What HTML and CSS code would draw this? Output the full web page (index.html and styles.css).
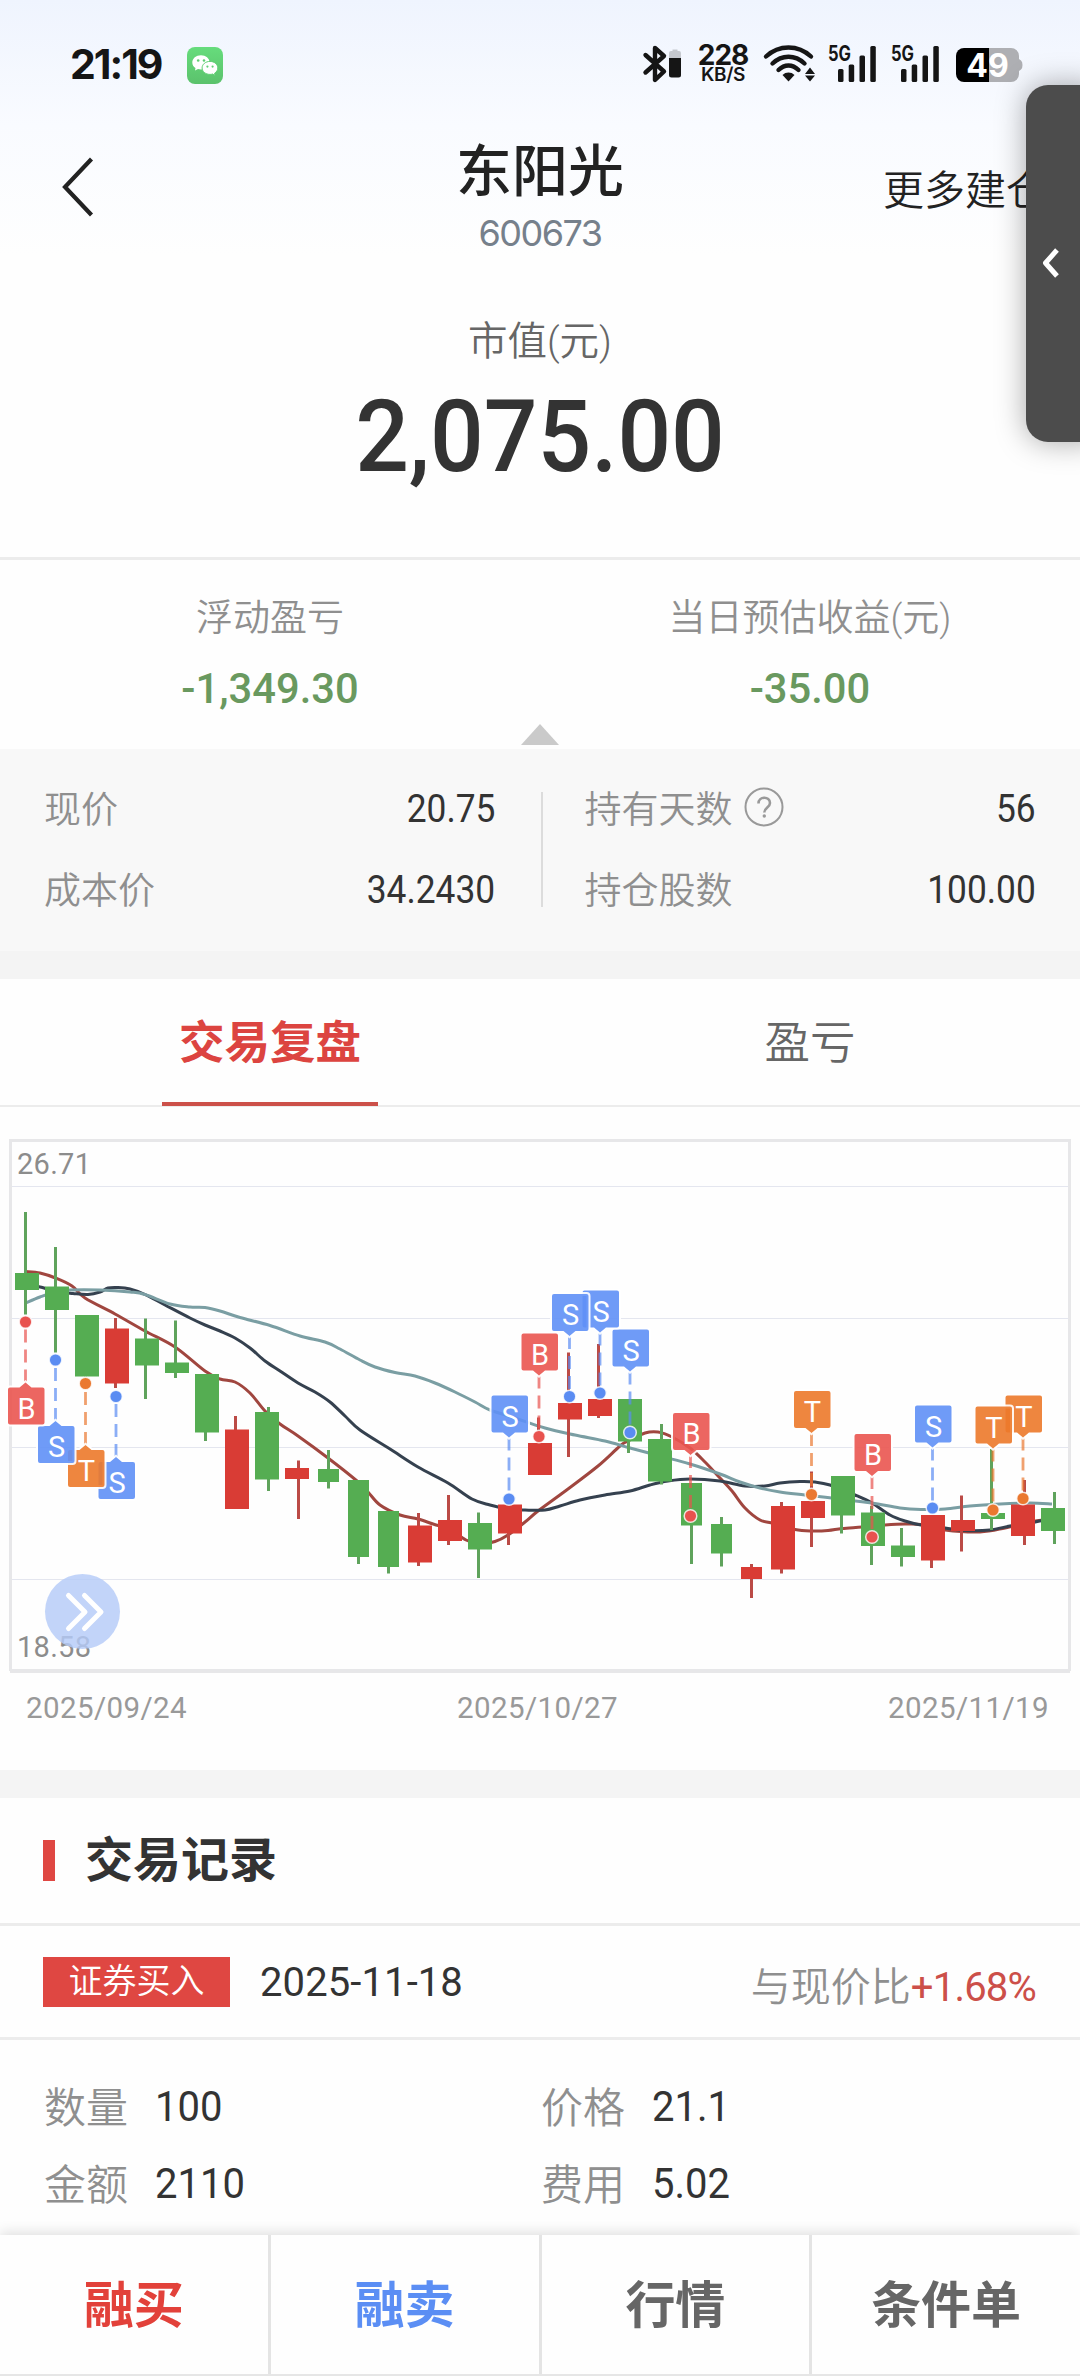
FILE: index.html
```html
<!DOCTYPE html>
<html lang="zh-CN">
<head>
<meta charset="utf-8">
<title>东阳光 600673</title>
<link rel="stylesheet" href="styles.css">
</head>
<body>
<div class="screen">
  <div class="status">
    <span class="clock">21:19</span>
    <svg class="wechat" width="36" height="37" viewBox="0 0 36 37">
      <defs><linearGradient id="wg" x1="0" y1="0" x2="0" y2="1"><stop offset="0" stop-color="#66dc7c"/><stop offset="1" stop-color="#5bc26c"/></linearGradient></defs>
      <rect width="36" height="37" rx="8" fill="url(#wg)"/>
      <path d="M14 8.200c-4.900 0-8.700 3.200-8.700 7.200 0 2.300 1.200 4.200 3.200 5.500l-.5 2.700 3-1.600c1 .2 2 .4 3 .4 4.800 0 8.600-3.200 8.600-7.100S18.800 8.200 14 8.200z" fill="#fff"/>
      <path d="M23 14.400c-4.400 0-7.900 2.900-7.900 6.500s3.500 6.500 7.900 6.500c.9 0 1.800-.1 2.600-.4l2.300 1.500-.3-2.300c1.900-1.200 3.200-3.100 3.200-5.300 0-3.600-3.500-6.500-7.800-6.500z" fill="#fff" stroke="#60cf74" stroke-width="1"/>
      <g fill="#60cf74"><circle cx="11.200" cy="13.500" r="1.300"/><circle cx="17" cy="13.500" r="1.300"/><circle cx="20.400" cy="19.600" r="1.100"/><circle cx="25.600" cy="19.600" r="1.100"/></g>
    </svg>
    <div class="status-icons">
      <svg width="38" height="40" viewBox="0 0 38 40">
        <path d="M2.500 11L21 27.500L12 36V4L21 12L2.500 28.500" fill="none" stroke="#151515" stroke-width="4.400" stroke-linejoin="round" stroke-linecap="round"/>
        <path d="M26 15V9a2 2 0 0 1 2-2h1.500V5.500h5V7H36a2 2 0 0 1 2 2v6z" fill="#c6c9cf"/>
        <path d="M26 14h12v17a2.500 2.500 0 0 1-2.500 2.500h-7A2.500 2.500 0 0 1 26 31z" fill="#151515"/>
      </svg>
      <div class="net"><b>228</b><i>KB/S</i></div>
      <svg class="wifi" width="52" height="40" viewBox="0 0 52 40">
        <g fill="none" stroke="#151515" stroke-width="4.400" stroke-linecap="round">
          <path d="M3 12.500C16 .5 35 .5 48 12.500"/><path d="M9.500 19.500C19 10.500 32 10.500 41.500 19.500"/><path d="M15.500 26C21.500 20 29.500 20 35.500 26"/>
        </g>
        <path d="M25.500 37.500l-6-6.500c3.400-3.300 8.600-3.300 12 0z" fill="#151515"/>
        <path d="M47 23.500l5 6.500h-10zM47 37.500l5-6h-10z" fill="#151515"/>
      </svg>
      <svg class="sig" width="50" height="40" viewBox="0 0 50 40">
        <text x="0" y="17" class="g5" textLength="23" lengthAdjust="spacingAndGlyphs">5G</text>
        <g fill="#151515"><rect x="10" y="25" width="5.500" height="13" rx="1.500"/><rect x="20.700" y="20.500" width="5.500" height="17.500" rx="1.500"/><rect x="31.500" y="11.500" width="5.500" height="26.500" rx="1.500"/><rect x="42.300" y="2" width="5.500" height="36" rx="1.500"/></g>
      </svg>
      <svg class="sig2" width="50" height="40" viewBox="0 0 50 40">
        <text x="0" y="17" class="g5" textLength="23" lengthAdjust="spacingAndGlyphs">5G</text>
        <g fill="#151515"><rect x="10" y="25" width="5.500" height="13" rx="1.500"/><rect x="20.700" y="20.500" width="5.500" height="17.500" rx="1.500"/><rect x="31.500" y="11.500" width="5.500" height="26.500" rx="1.500"/><rect x="42.300" y="2" width="5.500" height="36" rx="1.500"/></g>
      </svg>
      <svg class="batt" width="67" height="40" viewBox="0 0 67 40">
        <path d="M8 4h25v34H8a8 8 0 0 1-8-8V12a8 8 0 0 1 8-8z" fill="#000"/>
        <path d="M33 4h22a8 8 0 0 1 8 8v3l2 1.500q1.500 1 1.500 4.500t-1.500 4.500L63 27v3a8 8 0 0 1-8 8H33z" fill="#aeafb3"/>
        <text x="31.500" y="33" text-anchor="middle" class="pct">49</text>
      </svg>
    </div>
  </div>

  <header class="nav">
    <svg class="back" width="34" height="60" viewBox="0 0 34 60"><path d="M30.500 2L4 30l26.500 28" fill="none" stroke="#222" stroke-width="4.200"/></svg>
    <div class="nav-title"><h1>东阳光</h1><p>600673</p></div>
    <span class="more">更多建仓</span>
  </header>

  <section class="value"><p>市值(元)</p><strong>2,075.00</strong></section>

  <section class="profit">
    <div><p>浮动盈亏</p><strong>-1,349.30</strong></div>
    <div><p>当日预估收益(元)</p><strong>-35.00</strong></div>
    <i class="caret"></i>
  </section>

  <section class="holding">
    <dl>
      <div><dt>现价</dt><dd>20.75</dd></div>
      <div><dt>成本价</dt><dd>34.2430</dd></div>
    </dl>
    <dl>
      <div><dt>持有天数<svg width="40" height="40" viewBox="0 0 40 40"><circle cx="20" cy="20" r="18.500" fill="none" stroke="#999" stroke-width="2"/><path d="M14.500 16.500c0-7.500 11.500-7.500 11.500-.5 0 4.500-5.700 4.500-5.700 9.500" fill="none" stroke="#999" stroke-width="2.600"/><circle cx="20.300" cy="29" r="1.700" fill="#999"/></svg></dt><dd>56</dd></div>
      <div><dt>持仓股数</dt><dd>100.00</dd></div>
    </dl>
  </section>

  <nav class="tabs"><div class="on"><span>交易复盘</span></div><div><span>盈亏</span></div></nav>

  <section class="chart">
    <svg id="kline" width="1080" height="570" viewBox="0 0 1080 570"></svg>
    <div class="dates"><span>2025/09/24</span><span>2025/10/27</span><span>2025/11/19</span></div>
  </section>

  <section class="records">
    <h2>交易记录</h2>
    <div class="rec-head"><span class="tag">证券买入</span><time>2025-11-18</time><p>与现价比<em>+1.68%</em></p></div>
    <div class="rec-body">
      <p>数量<b>100</b></p><p>价格<b>21.1</b></p>
      <p>金额<b>2110</b></p><p>费用<b>5.02</b></p>
    </div>
  </section>

  <footer class="actions"><a class="buy">融买</a><a class="sell">融卖</a><a>行情</a><a>条件单</a></footer>

  <div class="drawer"><svg width="20" height="34" viewBox="0 0 20 34"><path d="M16 4L4.500 17L16 30" fill="none" stroke="#fff" stroke-width="5" stroke-linejoin="round"/></svg></div>
</div>
<script src="chart.js"></script>
</body>
</html>
```

FILE: styles.css
```css
* { box-sizing: border-box; margin: 0; padding: 0; }
body { width: 1080px; height: 2376px; overflow: hidden; font-family: Roboto, "Noto Sans CJK SC", sans-serif; color: #333; background: #fefefe; }
i, em { font-style: normal; }
svg { display: block; flex: none; overflow: visible; }
.screen { position: relative; width: 1080px; height: 2376px; overflow: hidden; display: flex; flex-direction: column; background: linear-gradient(#eff4fe 0, #f9fbff 125px, #fefefe 255px); }
.screen > * { flex: none; }

.status { height: 126px; padding: 4px 0 0 70px; display: flex; align-items: center; }
.clock { width: 117px; font: 700 41px/50px Inter, sans-serif; letter-spacing: -2px; color: #151515; margin-top: -2px; }
.status-icons { display: flex; align-items: center; margin-left: 420px; height: 40px; margin-top: -2px; }
.net { width: 50px; margin-left: 17px; display: flex; flex-direction: column; align-items: center; color: #151515; }
.net b { font: 700 28px/22px Inter, sans-serif; letter-spacing: -1px; }
.net i { font: 600 19px/18px Inter, sans-serif; letter-spacing: -.3px; }
.wifi { margin-left: 15px; }
.sig { margin-left: 13px; }
.sig2 { margin-left: 13px; }
.batt { margin-left: 15px; }
.g5 { font: 700 21px Inter, sans-serif; fill: #151515; }
.pct { font: 700 32px Inter, sans-serif; fill: #fff; }

.nav { height: 154px; display: flex; }
.back { margin: 31px 0 0 61px; }
.nav-title { width: 400px; margin: 0 auto 0 245px; text-align: center; }
.nav-title h1 { font-size: 56px; line-height: 80px; font-weight: 500; color: #222; margin-top: 6px; }
.nav-title p { font: 400 36px/44px Inter, sans-serif; letter-spacing: -1.500px; color: #76808b; margin-top: -1px; }
.more { width: 197px; font-size: 41px; line-height: 60px; margin-top: 35px; white-space: nowrap; color: #222; font-weight: 350; }

.value { height: 280px; text-align: center; border-bottom: 3px solid #ececec; padding-top: 34px; }
.value p { font-size: 39.500px; line-height: 56px; color: #666; font-weight: 350; }
.value strong { display: block; font-size: 100px; line-height: 120px; font-weight: 500; transform: scaleX(.945); margin-top: 7px; }

.profit { position: relative; height: 189px; display: flex; }
.profit div { flex: 1; text-align: center; padding-top: 33px; }
.profit p { font-size: 37px; line-height: 52px; color: #8f8f8f; font-weight: 350; }
.profit strong { display: block; font-size: 43px; line-height: 50px; font-weight: 500; color: #69995f; margin-top: 18px; transform: scaleX(.97); }
.caret { position: absolute; left: 521px; bottom: 4px; border: 19px solid transparent; border-top: 0; border-bottom: 21px solid #cacaca; }

.holding { height: 230px; background: #f8f8f8; border-bottom: 28px solid #f4f4f4; padding: 43px 44px 44px; display: flex; }
.holding dl { flex: 1; height: 115px; padding-right: 45px; font-size: 37px; display: flex; flex-direction: column; justify-content: space-between; }
.holding dl + dl { border-left: 2px solid #dcdcdc; padding: 0 0 0 42px; }
.holding dl div { display: flex; justify-content: space-between; align-items: center; height: 34px; }
.holding dt { display: flex; align-items: center; color: #8f8f8f; font-weight: 350; gap: 11px; margin-top: -5px; }
.holding dd { font-size: 38px; transform: scaleX(.93); transform-origin: right; }

.tabs { height: 128px; display: flex; border-bottom: 2px solid #ececec; }
.tabs div { flex: 1; display: flex; justify-content: center; font-size: 45.500px; line-height: 130px; color: #666; font-weight: 350; }
.tabs .on span { width: 216px; text-align: center; color: #dc4440; font-weight: 700; border-bottom: 4px solid #cc5049; height: 127px; }

.chart { height: 691px; border-bottom: 28px solid #f4f4f4; padding-top: 13px; }
.dates { display: flex; justify-content: space-between; padding: 0 31px 0 26px; font-size: 29.500px; line-height: 36px; letter-spacing: .4px; color: #999; }
.chart text { font-family: Roboto, sans-serif; }
.axis { font-size: 29px; fill: #8c8c8c; }
.flag { font-size: 29px; fill: #fff; text-anchor: middle; }

.records h2 { height: 128px; padding: 0 43px; font-size: 48px; line-height: 122px; display: flex; align-items: center; gap: 30px; border-bottom: 3px solid #ececec; }
.records h2::before { content: ""; width: 12px; height: 41px; background: #df4742; }
.rec-head { height: 114px; padding: 0 44px 0 43px; display: flex; align-items: center; border-bottom: 3px solid #ececec; }
.tag { width: 187px; height: 50px; background: #df4742; color: #fff; font-size: 34px; line-height: 48px; text-align: center; font-weight: 350; }
.rec-head time { font-size: 40px; margin-left: 30px; letter-spacing: .1px; padding-top: 1px; }
.rec-head p { margin-left: auto; font-size: 40px; color: #8f8f8f; font-weight: 350; padding-top: 5px; }
.rec-head em { color: #cc4f49; font-weight: 400; letter-spacing: -.8px; }
.rec-body { display: grid; grid-template-columns: 497px 1fr; grid-auto-rows: 77px; padding: 26px 0 0 44px; }
.rec-body p { display: flex; align-items: center; font-size: 42px; color: #8f8f8f; font-weight: 350; gap: 27px; }
.rec-body b { font-size: 43px; font-weight: 400; color: #333; transform: scaleX(.93); transform-origin: left; padding-top: 3px; }

.actions { position: absolute; left: 0; top: 2235px; width: 1080px; height: 141px; background: #fefefe; display: flex; border-bottom: 2px solid #e6e6e6; box-shadow: 0 -3px 12px rgba(0,0,0,.12); }
.actions a { flex: 1; text-align: center; font-size: 50px; line-height: 142px; font-weight: 700; color: #666; border-right: 3px solid #e4e4e4; }
.actions a:last-child { border: 0; }
.actions .buy { color: #e2413a; }
.actions .sell { color: #5b8ef4; }

.drawer { position: absolute; left: 1026px; top: 85px; width: 80px; height: 357px; border-radius: 22px; background: #4c4c4c; box-shadow: 0 0 30px rgba(0,0,0,.35); padding: 161px 0 0 15px; }
```

FILE: chart.js
```js
const svg = document.getElementById('kline');
const RED = '#d93c35', GREEN = '#55ad52';
const out = [];

// frame and grid
for (const y of [66.5, 198.5, 327.5, 459.5]) out.push(`<path d="M12 ${y}H1068" stroke="#e4e6ef" stroke-width="1"/>`);
out.push('<path d="M10.500 551V20.500H1069.500V551" fill="none" stroke="#e7e7e9" stroke-width="3"/><path d="M10 551H1070" stroke="#e7e7e9" stroke-width="4"/>');
out.push('<text class="axis" x="17" y="54" textLength="74">26.71</text><text class="axis" x="17" y="537" textLength="74">18.58</text>');

// moving averages
const lines = [
  ['#a0463f', [[25.5,151.5],[40,153],[55.5,158],[72,166],[85,178],[115,194],[145,211],[175,227],[205,251],[220,259],[235,262],[250,273],[265,291],[280,304],[298,316],[328,338],[357,361],[368,372],[380,385],[400,395],[418,399],[436,405],[448,408],[466,420],[480,424],[495,421.5],[508,415],[525,402],[538,391],[568,369],[598,346],[620,326],[628,321],[645,313],[658,312],[672,317],[690,328],[705,342],[720,358],[732,371],[745,388],[760,400],[772,403],[795,409.5],[812,411],[828,410.5],[842,408.5],[862,407],[885,405],[905,404],[921,404.5],[945,410],[980,412],[1005,408],[1030,402],[1050,399]]],
  ['#35414f', [[25.5,164],[40,167],[60,172],[73,173.5],[88,174.5],[100,172],[108,168],[118,167.5],[130,169],[145,174.5],[165,185],[190,198],[205,205],[220,211],[235,218],[250,228],[265,241],[280,251],[298,263],[315,272],[330,282],[345,296],[360,310],[390,329],[418,347],[448,363],[472,379],[490,385],[508,389],[525,390],[545,390],[560,386],[580,380],[605,375],[630,371],[650,365],[668,361],[690,359],[720,361],[745,366],[765,366],[780,363],[800,361.5],[815,362],[830,365],[855,375],[872,383],[890,395],[905,401],[921,405],[945,408],[965,410.5],[990,410],[1010,406],[1030,403],[1045,400]]],
  ['#7a9ea3', [[25.5,183],[40,177],[55,172],[70,170],[100,170],[130,172],[145,174.5],[170,184],[190,187],[205,187.5],[220,191],[240,197.5],[270,205.5],[300,216],[325,222],[340,229],[360,240],[375,247],[395,252.5],[415,256],[435,263],[455,272],[475,282],[490,290],[515,298],[545,308],[575,315],[605,321],[630,328],[660,336],[690,344],[720,354],[740,362],[760,368],[780,372],[805,375],[840,379],[872,383],[900,388],[921,389.5],[945,389],[970,386],[1000,384],[1030,383],[1052,384]]]
];
for (const [color, p] of lines) {
  let d = `M${p[0]}`;
  for (let i = 0; i < p.length - 1; i++) {
    const a = p[i - 1] || p[i], b = p[i], c = p[i + 1], e = p[i + 2] || c;
    d += `C${b[0] + (c[0] - a[0]) / 6} ${b[1] + (c[1] - a[1]) / 6} ${c[0] - (e[0] - b[0]) / 6} ${c[1] - (e[1] - b[1]) / 6} ${c[0]} ${c[1]}`;
  }
  out.push(`<path d="${d}" fill="none" stroke="${color}" stroke-width="3"/>`);
}

// candles: left, body top, body bottom, high, low, up?, wick x, width
const candles = [
  [15,153,170,92,194.5,0,25.5,24],[45,166.5,190,127,232.5,0,55.5,24],[75,195,256.5,195,256.5,0,85.5,24],[105,208.5,263.5,198,268,1,115.5,24],
  [135,218.5,245.5,198.5,279,0,145.5,24],[165,242.5,253,200.5,258,0,175.5,24],[195,254,312.5,254,321,0,205.5,24],[225,309.5,389,296,389,1,235.5,24],
  [255,292,359.5,287,371,0,268.5,24],[285,348,359,340.5,399,1,298.5,24],[318,349,362,330,368.5,0,328.5,21],[348,360,437,360,444,0,358.5,21],
  [378,391,447,391,453.5,0,388.5,21],[408,405.5,442.5,393,446,1,418.5,24],[438,400,421,375,425,1,448.5,24],[468,403,429.5,392.5,458,0,478.5,24],
  [498,384.5,413.5,384.5,425,1,508.5,24],[528,323,355,297.5,355,1,538.5,24],[558,283,299.5,232.5,337,1,568.5,24],[588,279,296,224,298,1,598.5,24],
  [618,279,321.5,279,333,0,628.5,24],[648,319,361.5,304,364.5,0,661.5,24],[681,363,405.5,363,444,0,691.5,21],[711,404,433.5,397,446.5,0,721.5,21],
  [741,447,459,444,478,1,751.5,21],[771,386,449.5,382,453.5,1,781.5,24],[801,381,398,351.5,427,1,811.5,24],[831,356,395.5,356,413.5,0,841.5,24],
  [861,392.5,426,386,445,0,871.5,24],[891,425.5,437,408,446.5,0,901.5,24],[921,395,440.5,395,448,1,931.5,24],[951,400,411,375.5,431.5,1,961.5,24],
  [981,393,399,329,410,0,991.5,24],[1011,384.5,416,360,425,1,1024.5,24],[1041,388,411,372,424,0,1054.5,24]
];
for (const [x, t, b, h, l, up, wx, w] of candles) {
  out.push(`<rect x="${wx - 1.5}" y="${h}" width="3" height="${l - h}" fill="${up ? '#bb4b46' : '#5fa35c'}"/>`);
  out.push(`<rect x="${x}" y="${t}" width="${w}" height="${b - t}" fill="${up ? RED : GREEN}"/>`);
}

// trade flags: letter, x, dot y, box top, flag under the dot?
const flags = [
  ['B',25.5,202,267.5,1],['S',55.5,240,306,1],['T',85.5,263.5,330,1],['S',116,276.5,342,1],
  ['S',509,379,275.5],['B',539,316.5,213.5],['S',569.5,276.5,174],['S',600,273,170.5],['S',630,312.5,209.5],['B',690.5,396,293],
  ['T',811.5,374.5,271],['B',872,417,314],['S',932.5,388,285.5],['T',993,390,286.5],['T',1023,378.5,275.5]
];
const tint = { B: ['#ea5550', '#e8524e'], S: ['#5f90f6', '#5a8cf2'], T: ['#ec792a', '#ea7830'] };
for (const [c, x, dy, top, under] of flags.reverse()) {
  const [box, dot] = tint[c], l = x - 17.5, r = l + 36.5, b = top + 37;
  const y0 = under ? top - 5 : b + 5;
  const shape = under
    ? `M${l + 2} ${top}H${x - 6}L${x} ${top - 5}L${x + 6} ${top}H${r - 2}q2 0 2 2V${b - 2}q0 2-2 2H${l + 2}q-2 0-2-2V${top + 2}q0-2 2-2z`
    : `M${l + 2} ${top}H${r - 2}q2 0 2 2V${b - 2}q0 2-2 2H${x + 6}L${x} ${b + 5}L${x - 6} ${b}H${l + 2}q-2 0-2-2V${top + 2}q0-2 2-2z`;
  out.push(`<path d="M${x} ${y0}V${dy}" stroke="${dot}" stroke-opacity=".7" stroke-width="2.800" stroke-dasharray="13 7"/>`);
  out.push(`<circle cx="${x}" cy="${dy}" r="6.300" fill="${dot}" stroke="#fff" stroke-opacity=".8" stroke-width="1.500"/>`);
  out.push(`<path d="${shape}" fill="none" stroke="#fff" stroke-opacity=".9" stroke-width="4"/><path d="${shape}" fill="${box}" fill-opacity=".9"/>`);
  out.push(`<text class="flag" x="${x + 1}" y="${top + 31}">${c}</text>`);
}

// expand button
out.push('<circle cx="82.500" cy="491.500" r="37.500" fill="#b4cbf8" fill-opacity=".82"/><path d="M68.500 475.500L85 492L68.500 508.500M84.500 475.500L101 492L84.500 508.500" fill="none" stroke="#fff" stroke-width="5" stroke-linecap="round" stroke-linejoin="round"/>');
svg.innerHTML = out.join('');
```
